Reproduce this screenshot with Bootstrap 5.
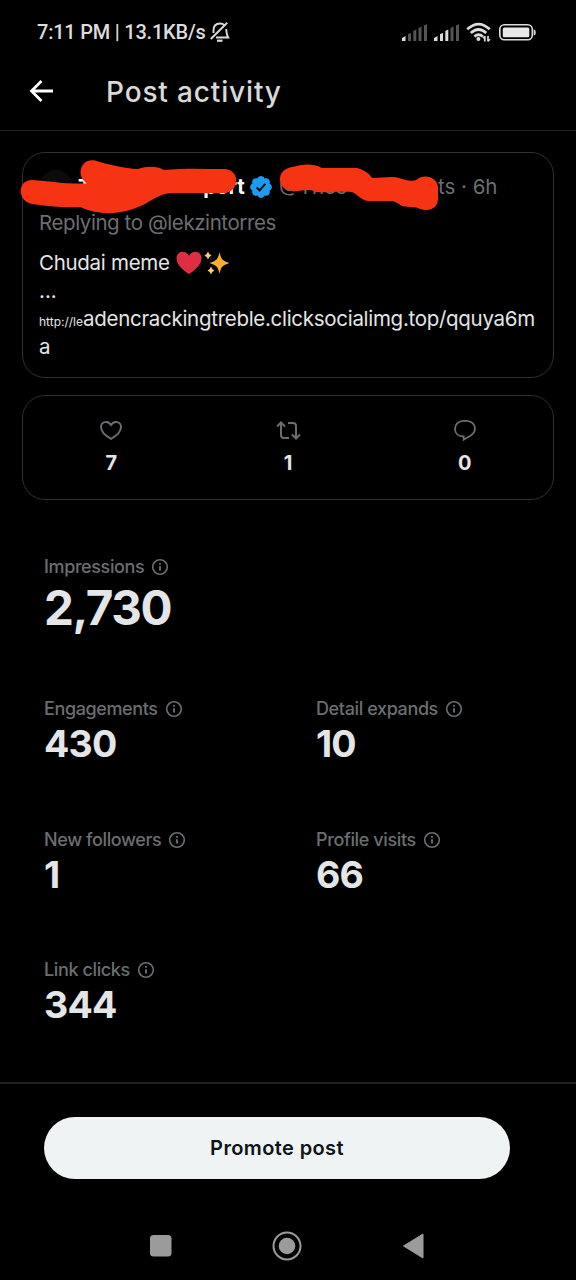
<!DOCTYPE html>
<html lang="en">
<head>
<meta charset="utf-8">
<meta name="viewport" content="width=device-width, initial-scale=1">
<title>Post activity</title>
<link href="https://cdn.jsdelivr.net/npm/bootstrap@5.3.0/dist/css/bootstrap.min.css" rel="stylesheet">
<style>
  body{background:#000;color:#e4e5e6;font-family:Inter,"Liberation Sans",sans-serif;height:1280px;overflow:hidden}
  svg{display:block;flex:none;overflow:visible}
  .statusbar{height:60px;padding:4px 40px 0 37px;font:500 20px/1 Roboto,sans-serif;color:#dcdcdc}
  .clock{letter-spacing:-.22px}
  .topbar{height:71px;padding:0 29px 7px;border-bottom:1px solid #1d1f20}
  .topbar h1{font-size:28px;font-weight:500;letter-spacing:.85px;margin:0 0 0 52px;color:#d9d9d9;line-height:40px}
  .panel{border:1px solid #2f3132;border-radius:23px;margin:0 22px}
  .post{height:226px;margin-top:21px;padding:18px 15.5px 0 16px;font-size:20.5px}
  .muted{color:#6b6e71}
  .author{height:31px;line-height:31px}
  .avatar{width:34px;height:34px;border-radius:50%;background:#0b0b0c}
  .tiny{font-size:12px}
  .url{letter-spacing:-.29px}
  .post-text{line-height:28px;margin-top:12px}
  .scribble{left:0;top:0}
  .counts{height:105px;margin-top:17px;padding-top:24px;font-size:20px;font-weight:700;line-height:26px}
  .counts svg{margin:0 auto 10px}
  .metrics{padding:0 44px;height:582px}
  .metric-label{font-size:18px;line-height:24px;font-weight:500;color:#6b6e71;gap:7px;letter-spacing:-.38px}
  .metric-value{font-size:37.5px;line-height:46px;font-weight:700;letter-spacing:-.8px}
  .metric-main{font-size:47.5px;line-height:58px;letter-spacing:-1.4px}
  .footer-bar{border-top:2px solid #1f2122;height:131px;padding:33px 66px 0 44px}
  .btn-promote{--bs-btn-bg:#eff3f4;--bs-btn-color:#0f1419;--bs-btn-border-width:0;height:62px;font-size:20px;font-weight:600;letter-spacing:.38px}
  .sysnav{height:66px;color:#9b9b9b;padding-right:2px}
</style>
</head>
<body class="d-flex flex-column">
<svg width="0" height="0" class="position-absolute"><defs>
  <symbol id="info" viewBox="0 0 18 18"><circle cx="9" cy="9" r="7.3" fill="none" stroke="#6b6e71" stroke-width="1.6"/><path d="M9 8.2v4.2M9 5v1.8" stroke="#6b6e71" stroke-width="1.9"/></symbol>
</defs></svg>

<header class="statusbar d-flex align-items-center">
  <span class="clock">7:11 PM | 13.1KB/s</span>
  <svg style="margin-left:4px" width="20" height="22" viewBox="0 0 20 22" fill="none" stroke="#dcdcdc" stroke-width="1.9"><path d="M3.500 12V9.500C3.500 5 6 2.500 10 2.500c2 0 3.500.7 4.500 1.800M16.200 8c.3 3.500.5 6 2 8.500H6M.8 18 17.200 1.800"/><path d="M7 19.700h5.500" stroke-width="2.200"/></svg>
  <div class="d-flex ms-auto align-items-center">
    <svg width="25" height="17" viewBox="0 0 25 17"><path fill="#dcdcdc" d="M0 17v-3l3.500-2v5z"/><path fill="#555" d="M6 17v-7l3-1v8zM11.300 17V7l3-1.500V17zM16.500 17V4l3-1.500V17zM22 17V1.500L25 .3V17z"/></svg>
    <svg style="margin:0 7px" width="25" height="17" viewBox="0 0 25 17"><path fill="#dcdcdc" d="M0 17v-3l3.500-2v5zM6 17v-7l3-1v8zM11.300 17V7l3-1.500V17z"/><path fill="#555" d="M16.500 17V4l3-1.500V17zM22 17V1.500L25 .3V17z"/></svg>
    <svg width="25" height="20" viewBox="0 0 25 20" fill="none" stroke="#dcdcdc" stroke-width="2.700"><path d="M1.200 7.300q11.400-10.500 22.500 0M4.800 11q7.700-7 15.500 0M8.400 14.500q4.200-3.500 8.400 0"/><circle cx="12.400" cy="17" r="2" fill="#dcdcdc" stroke="none"/><path d="M18.800 19.500V14M22 14v5.500" stroke-width="1.700"/><path d="m16.800 16.300 2-2M24 17.200l-2 2" stroke-width="1.500"/></svg>
    <svg style="margin-left:8px" width="37" height="17" viewBox="0 0 37 17"><rect x=".8" y=".8" width="32.500" height="15" rx="4.500" fill="none" stroke="#dcdcdc" stroke-width="1.600"/><rect x="3.800" y="3.500" width="26.500" height="9.700" rx="1.500" fill="#e8e8e8"/><path d="M34.700 5.500q2 0 2 2.900t-2 2.900z" fill="#dcdcdc"/></svg>
  </div>
</header>

<div class="topbar d-flex align-items-center">
  <svg width="25" height="24" viewBox="0 0 25 24" fill="none" stroke="#fff" stroke-width="2.800"><path d="M24 11H2.500M12.500 1 2.500 11 12.500 21"/></svg>
  <h1>Post activity</h1>
</div>

<section class="panel post position-relative">
  <div class="author d-flex align-items-center text-nowrap">
    <span class="avatar"></span>
    <b class="text-white" style="margin-left:5px">T</b>
    <b class="text-white ms-auto" style="margin-right:5px">port</b>
    <svg width="22" height="22" viewBox="0 0 22 22"><path fill="#1d9bf0" d="M20.400 11c0-1.300-.8-2.500-2-3.100.5-1.300.2-2.700-.7-3.600s-2.300-1.200-3.600-.7C13.500 2.400 12.300 1.600 11 1.600s-2.500.8-3.100 2c-1.300-.5-2.700-.2-3.600.7s-1.200 2.300-.7 3.600C2.400 8.500 1.600 9.700 1.600 11s.8 2.500 2 3.100c-.5 1.300-.2 2.700.7 3.600s2.300 1.200 3.600.7c.6 1.200 1.800 2 3.100 2s2.500-.8 3.100-2c1.300.5 2.700.2 3.600-.7s1.200-2.300.7-3.600c1.200-.6 2-1.800 2-3.100z" transform="matrix(1.160 0 0 1.160 -1.760 -1.760)"/><path d="m6.700 11.500 2.900 2.800 5.700-6.500" fill="none" stroke="#000" stroke-width="1.900"/></svg>
    <span class="muted" style="margin-left:7px;width:159px">@Thes</span>
    <span class="muted" style="margin-right:40px">ts · 6h</span>
  </div>
  <div class="muted" style="line-height:32px;margin-top:5px;letter-spacing:-.42px">Replying to @lekzintorres</div>
  <div class="post-text">
    <div class="d-flex align-items-center" style="margin-top:-2px;height:28px"><span class="url">Chudai meme</span>
      <svg style="margin-left:6px" width="26" height="24" viewBox="0 0 26 24"><path fill="#dd2e44" d="M13 23C8 20 .5 14 .5 7.200.5 3 3.500.8 6.800.8 9.500.8 12 2.500 13 5c1-2.500 3.500-4.200 6.200-4.200 3.300 0 6.300 2.200 6.300 6.400C25.500 14 18 20 13 23z"/></svg>
      <svg style="margin-left:2px" width="26" height="24" viewBox="0 0 26 24"><path fill="#ffac33" d="M15.500 1c1.500 7 2.500 8.500 10 11-7.500 2.500-8.500 4-10 11-1.500-7-2.500-8.500-10-11 7.500-2.500 8.500-4 10-11z"/><path fill="#ffcc6e" d="M4 .5q.7 3 3.700 4-3 1-3.700 4-.7-3-3.700-4 3-1 3.700-4zM7 15.500q.7 3 3.500 4-2.800 1-3.500 4-.7-3-3.500-4 2.800-1 3.500-4z"/></svg>
    </div>
    <div>...</div>
    <div class="text-nowrap" style="height:28px"><span class="tiny">http://le</span><span class="url">adencrackingtreble.clicksocialimg.top/qquya6m</span></div>
    <div>a</div>
  </div>
  <svg class="scribble position-absolute" width="1" height="1" viewBox="23 153 1 1"><path fill="#f63413" d="M32 180C50 181 60 184 87 183.500 82 180 80.500 176 80.500 172 81 164 87 159 95 160.500 110 165 125 168.500 138 169c9-3 19-3 26 1 20-2 40-1 61-1 15 1 15 22 0 24h-50c-12-1-20 5-30 11-20 10-43 13-65 3-18 1-32-1-48-3-15-3-15-24 0-24z"/><path fill="#f63413" d="M280 180c0-7 3-11 12-13 9-2 19-5 30 1h35c7 2 12 5 15 10 10 0 20-2 27 0 7 2 11 4 17 2 8-7 21-3 22 7v12c0 9-8 13-18 10-5-3-12-1-18-3-3-2-6-4-9-5h-25c-7-1-11-7-16-9-13-1-25 1-37 0-4-4-13-1-20-1-9 0-15-4-15-11z"/></svg>
</section>

<section class="panel counts">
  <div class="row g-0 text-center">
    <div class="col"><svg width="22" height="20" viewBox="0 0 22 20" fill="none" stroke="#6b6e71" stroke-width="1.900"><path d="M11 18.800C5 15.500 1 11.500 1 7.100 1 1.500 8 .2 11 5 14 .2 21 1.500 21 7.100c0 4.400-4 8.400-10 11.700z"/></svg>7</div>
    <div class="col"><svg width="25" height="20" viewBox="0 0 25 20" fill="none" stroke="#6b6e71" stroke-width="2"><path d="M1 6.500l4-4 4 4M5 3v12q0 3 3 3h5M12 3h5q3 0 3 3v12M16 14.500l4 4 4-4"/></svg>1</div>
    <div class="col"><svg width="22" height="20" viewBox="0 0 22 20" fill="none" stroke="#6b6e71" stroke-width="1.800"><path d="M9.500 16.500C4.500 16.300 1 13.300 1 8.900 1 4.300 4.500.8 9.500.8h3C17.500.8 21 4.300 21 8.400c0 4-2.500 6-5 7.600l-6.300 3.700v-3.200z"/></svg>0</div>
  </div>
</section>

<main class="metrics">
  <div style="padding-top:55px;height:142px">
    <div class="metric-label d-flex align-items-center">Impressions <svg width="18" height="18"><use href="#info"/></svg></div>
    <div class="metric-value metric-main">2,730</div>
  </div>
  <div class="row g-0" style="margin-top:55px">
    <div class="col-auto" style="width:272px;height:130.500px">
      <div class="metric-label d-flex align-items-center">Engagements <svg width="18" height="18"><use href="#info"/></svg></div>
      <div class="metric-value">430</div>
    </div>
    <div class="col">
      <div class="metric-label d-flex align-items-center">Detail expands <svg width="18" height="18"><use href="#info"/></svg></div>
      <div class="metric-value">10</div>
    </div>
  </div>
  <div class="row g-0">
    <div class="col-auto" style="width:272px;height:130.500px">
      <div class="metric-label d-flex align-items-center">New followers <svg width="18" height="18"><use href="#info"/></svg></div>
      <div class="metric-value">1</div>
    </div>
    <div class="col">
      <div class="metric-label d-flex align-items-center">Profile visits <svg width="18" height="18"><use href="#info"/></svg></div>
      <div class="metric-value">66</div>
    </div>
  </div>
  <div class="metric-label d-flex align-items-center">Link clicks <svg width="18" height="18"><use href="#info"/></svg></div>
  <div class="metric-value">344</div>
</main>

<div class="footer-bar"><button class="btn btn-promote rounded-pill w-100">Promote post</button></div>

<nav class="sysnav d-flex align-items-center justify-content-center">
  <svg width="22" height="22" viewBox="0 0 22 22"><rect width="21.500" height="21.500" rx="3.500" fill="currentColor"/></svg>
  <svg style="margin:0 101px 0 100px" width="30" height="30" viewBox="0 0 30 30"><circle cx="15" cy="15" r="13.500" fill="none" stroke="currentColor" stroke-width="2"/><circle cx="15" cy="15" r="8.300" fill="currentColor"/></svg>
  <svg width="21" height="26" viewBox="0 0 21 26"><path d="M.5 13 20 1v24z" fill="currentColor" stroke="currentColor" stroke-linejoin="round"/></svg>
</nav>
<script src="https://cdn.jsdelivr.net/npm/bootstrap@5.3.0/dist/js/bootstrap.bundle.min.js"></script>
</body>
</html>
